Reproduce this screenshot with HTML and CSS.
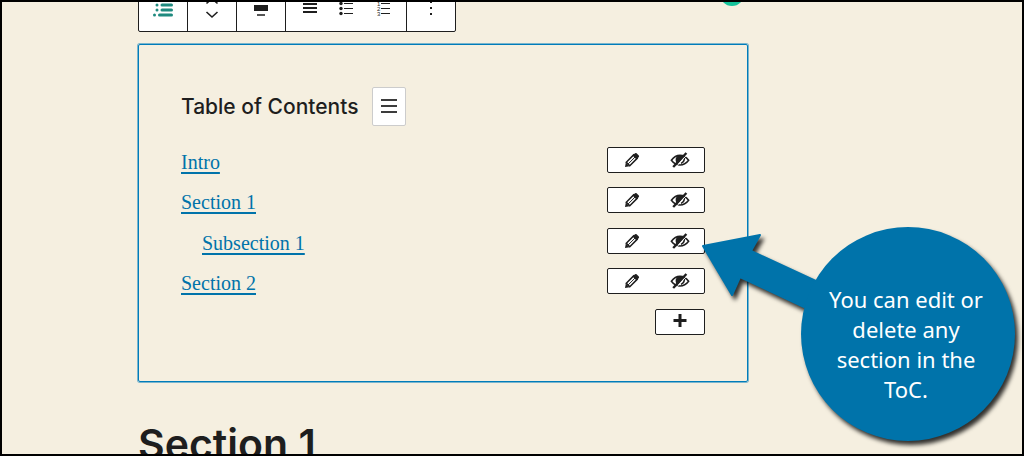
FILE: index.html
```html
<!DOCTYPE html>
<html lang="en">
<head>
<meta charset="utf-8">
<title>Table of Contents block</title>
<link rel="stylesheet" href="styles.css">
</head>
<body>
<svg class="sprite" aria-hidden="true">
  <symbol id="pencil" viewBox="0 0 16 16">
    <path d="M1 15 1.800 10.400 5.600 14.200Z" fill="currentColor"/>
    <path d="M2.3 10.2 9.6 2.9 13.1 6.4 5.8 13.7Z" fill="#fff" stroke="currentColor" stroke-width="1.5"/>
    <path d="M4.2 11.9 11.4 4.7" stroke="currentColor" stroke-width="1"/>
    <path d="M8.600 3.400 11 1.200Q11.8 .6 12.6 1.200L14.800 3.400Q15.4 4.2 14.800 5L12.600 7.400Z" fill="currentColor"/>
  </symbol>
  <symbol id="hide" viewBox="0 0 20 16">
    <path d="M1.400 8.200Q5 3.400 10 3.400T18.600 8.200Q15 13 10 13T1.400 8.200Z" fill="none" stroke="currentColor" stroke-width="1.600"/>
    <path d="M11.500 3.200A5 5 0 0 0 5.800 6Q5 9.800 7.600 12L14 4.500Z" fill="currentColor"/>
    <path d="M14.200 5.400Q15 9.400 11 11.400" fill="none" stroke="currentColor" stroke-width="1.600"/>
    <path d="M5.400 15.600 17.400 2.200" stroke="#fff" stroke-width="1"/>
    <path d="M3.200 15 16.400 1" stroke="currentColor" stroke-width="2.400"/>
  </symbol>
</svg>
<main class="frame">
  <div class="column">
    <div class="toolbar" role="toolbar" aria-label="Block tools">
      <div class="group"><button class="tool accent" aria-label="Table of contents block">
        <svg class="icon" viewBox="0 0 24 24" fill="none" stroke="currentColor" stroke-width="3" stroke-linecap="round"><path d="M6 4h0M11 4h9.500M6 9h0M11 9h9.500M6 14h0M11 14h9.500M3.500 19h0M8.500 19h12"/></svg>
      </button></div>
      <div class="group"><button class="tool" aria-label="Move up or down">
        <svg class="icon" viewBox="0 0 24 24" fill="none" stroke="currentColor" stroke-width="1.600"><path d="M6.500 7.500 12 2.500l5.500 5M6.500 16l5.500 5 5.500-5"/></svg>
      </button></div>
      <div class="group"><button class="tool" aria-label="Align">
        <svg class="icon" viewBox="0 0 24 24" fill="currentColor"><path d="M5 9h14v6H5zM8 4h8v2H8z"/><path d="M8 18h8v2H8z" opacity=".75"/></svg>
      </button></div>
      <div class="group formats">
        <button class="tool" aria-label="Plain list"><svg class="icon" viewBox="0 0 24 24" fill="currentColor"><path d="M5 7h14v2H5zM5 11h14v2H5zM5 15h14v2H5z"/></svg></button>
        <button class="tool" aria-label="Bulleted list"><svg class="icon" viewBox="0 0 24 24" fill="currentColor"><path d="M10 7h9v1h-9zM10 12h9v1h-9zM10 17h9v1h-9z"/><circle cx="7" cy="7.500" r="1.700"/><circle cx="7" cy="12.500" r="1.700"/><circle cx="7" cy="17.500" r="1.700"/></svg></button>
        <button class="tool" aria-label="Numbered list"><svg class="icon" viewBox="0 0 24 24" fill="currentColor"><path d="M11 7h9v1h-9zM11 12h9v1h-9zM11 17h9v1h-9z"/><text class="digit" x="7" y="10">1</text><text class="digit" x="7" y="15">2</text><text class="digit" x="7" y="20">3</text></svg></button>
      </div>
      <div class="group"><button class="tool" aria-label="Options">
        <svg class="icon" viewBox="0 0 24 24" fill="currentColor"><path d="M11 5h2v2h-2zM11 11h2v2h-2zM11 17h2v2h-2z"/></svg>
      </button></div>
    </div>

    <section class="toc">
      <header class="toc-head">
        <h2 class="toc-title">Table of Contents</h2>
        <button class="menu" aria-label="Toggle contents"><svg class="menu-icon" viewBox="0 0 16 16" fill="currentColor"><path d="M0 0h16v2H0zM0 6h16v2H0zM0 12h16v2H0z"/></svg></button>
      </header>
      <ul class="list">
        <li class="row"><a class="link" href="#intro">Intro</a>
          <div class="actions"><button class="act" aria-label="Edit Intro"><svg class="pencil"><use href="#pencil"/></svg></button><button class="act" aria-label="Hide Intro"><svg class="eye"><use href="#hide"/></svg></button></div></li>
        <li class="row"><a class="link" href="#section-1">Section 1</a>
          <div class="actions"><button class="act" aria-label="Edit Section 1"><svg class="pencil"><use href="#pencil"/></svg></button><button class="act" aria-label="Hide Section 1"><svg class="eye"><use href="#hide"/></svg></button></div></li>
        <li class="row nested"><a class="link" href="#subsection-1">Subsection 1</a>
          <div class="actions"><button class="act" aria-label="Edit Subsection 1"><svg class="pencil"><use href="#pencil"/></svg></button><button class="act" aria-label="Hide Subsection 1"><svg class="eye"><use href="#hide"/></svg></button></div></li>
        <li class="row"><a class="link" href="#section-2">Section 2</a>
          <div class="actions"><button class="act" aria-label="Edit Section 2"><svg class="pencil"><use href="#pencil"/></svg></button><button class="act" aria-label="Hide Section 2"><svg class="eye"><use href="#hide"/></svg></button></div></li>
      </ul>
      <div class="toc-foot"><div class="actions"><button class="act" aria-label="Add item"><svg class="plus" viewBox="0 0 14 14" fill="currentColor"><path d="M5.500-1h3v5h5v3h-5v5h-3V7h-5V4h5z"/></svg></button></div></div>
    </section>

    <h1 class="heading" id="section-1">Section 1</h1>
  </div>

  <span class="status"></span>

  <aside class="callout">
    <svg class="callout-shape" viewBox="0 0 324 226" aria-hidden="true">
      <path d="M3 17 60 6 51 22 118 53 104 78 40 48 32 66Z" stroke="#0073aa" stroke-width="2" stroke-linejoin="round"/>
      <circle cx="208" cy="105" r="107"/>
    </svg>
    <p class="callout-text">You can edit or delete any section in the ToC.</p>
  </aside>
</main>
</body>
</html>
```
FILE: styles.css
```css
* { box-sizing: border-box; }

body {
  margin: 0;
  background: #f5efe0;
  color: #1e1e1e;
  font-family: Inter, "Liberation Sans", sans-serif;
}

button {
  padding: 0;
  border: 0;
  background: none;
  color: inherit;
}

svg { display: block; }

.sprite {
  position: absolute;
  width: 0;
  height: 0;
}

.frame {
  position: relative;
  height: 100vh;
  overflow: hidden;
  border: 2px solid #000;
}

.column {
  max-width: 746px;
  padding-left: 136px;
}

.toolbar {
  display: flex;
  width: fit-content;
  margin-top: -19px;
  border: 1px solid #1e1e1e;
  border-radius: 2px;
  background: #fff;
}

.group { display: flex; }
.group + .group { border-left: 1px solid #1e1e1e; }
.formats { padding: 0 6px; }

.tool {
  display: flex;
  align-items: center;
  justify-content: center;
  width: 48px;
  height: 47px;
}

.formats .tool { width: 36px; }
.accent { color: #1f8a7f; }

.icon {
  width: 24px;
  height: 24px;
}

.digit {
  font: 6px "Liberation Sans", sans-serif;
}

.toc {
  margin-top: 12px;
  padding: 42px 42px 46px;
  border: 1px solid #007cba;
  border-radius: 2px;
  box-shadow: 0 0 0 1px rgba(0, 124, 186, 0.5);
}

.toc-head {
  display: flex;
  align-items: center;
  gap: 14px;
}

.toc-title {
  margin: 0;
  font-size: 21px;
  font-weight: 500;
}

.menu {
  display: flex;
  align-items: center;
  justify-content: center;
  width: 34px;
  height: 39px;
  border: 1px solid #ccc;
  border-radius: 2px;
  background: #fff;
  color: #3c3c3c;
}

.menu-icon {
  width: 16px;
  height: 16px;
}

.list {
  display: flex;
  flex-direction: column;
  gap: 14px;
  margin: 21px 0 15px;
  padding: 0;
  list-style: none;
}

.row {
  display: flex;
  align-items: flex-end;
  justify-content: space-between;
}

.nested {
  margin-top: 1px;
  padding-left: 21px;
}

.link {
  color: #0073aa;
  font: 20px/22px "Liberation Serif", serif;
  text-decoration-thickness: 2px;
  text-underline-offset: 3px;
}

.actions {
  display: flex;
  border: 1px solid #1e1e1e;
  border-radius: 2px;
  background: #fff;
}

.act {
  display: flex;
  align-items: center;
  justify-content: center;
  width: 48px;
  height: 24px;
}

.pencil {
  width: 16px;
  height: 16px;
}

.eye {
  width: 20px;
  height: 16px;
}

.plus {
  width: 14px;
  height: 14px;
  overflow: visible;
}

.toc-foot {
  display: flex;
  justify-content: flex-end;
}

.heading {
  margin: 36px 0 0;
  font-size: 41px;
  font-weight: 600;
  line-height: 52px;
}

.status {
  position: absolute;
  top: -20px;
  left: 718px;
  width: 24px;
  height: 24px;
  border-radius: 50%;
  background: #15c39a;
}

.callout {
  position: absolute;
  top: 227px;
  left: 698px;
  width: 324px;
}

.callout-shape {
  width: 324px;
  height: 226px;
  overflow: visible;
  fill: #0073aa;
  filter: drop-shadow(3px 4px 2px rgba(0, 0, 0, 0.8));
}

.callout-text {
  position: absolute;
  top: 55px;
  left: 120px;
  width: 172px;
  margin: 0;
  color: #fff;
  font: 22px/30px "Noto Sans", sans-serif;
  text-align: center;
}
```
